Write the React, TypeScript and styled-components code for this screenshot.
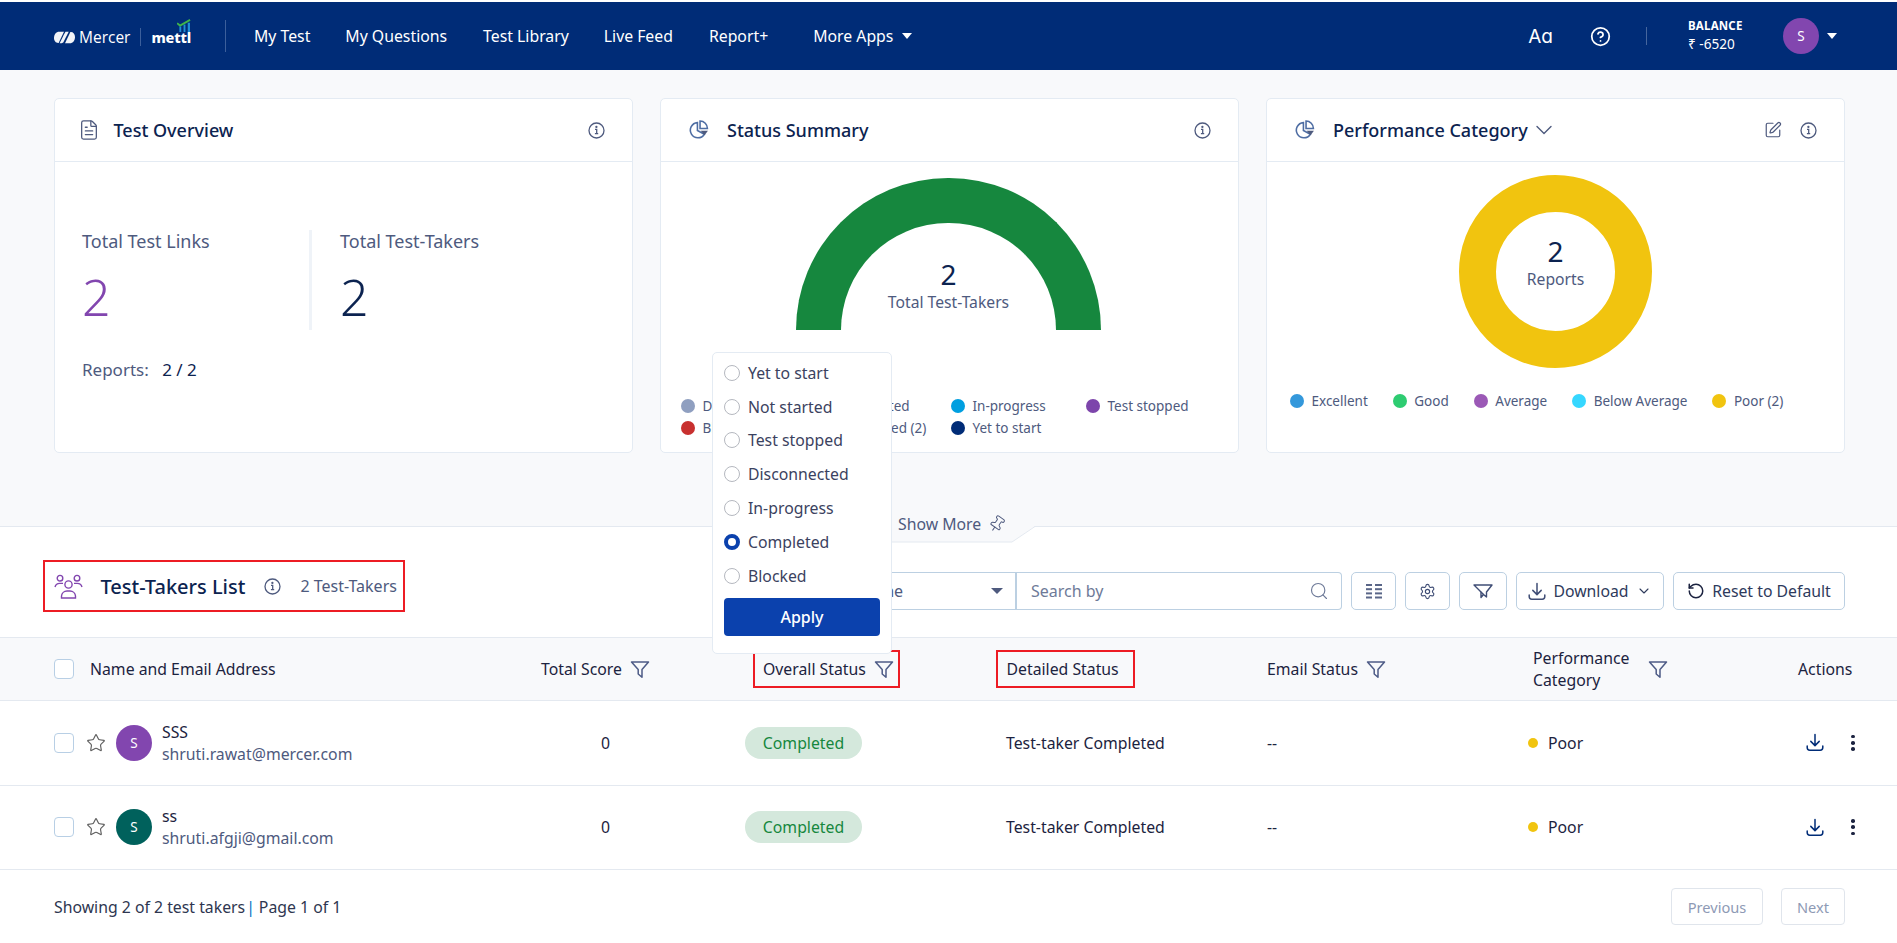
import React from "react";
import styled, { createGlobalStyle } from "styled-components";
import { ChevronDown, Search, Settings, RotateCcw, Star, SquarePen, FileText, Pin, CircleHelp } from "lucide-react";

const Global = createGlobalStyle`
  html, body { margin: 0; padding: 0; background: #fff; }
  * { box-sizing: border-box; }
  body { font-family: "Noto Sans", "Open Sans", sans-serif; color: #1c2340; }
`;

const Page = styled.div`
  position: relative;
  width: 1897px;
  height: 943px;
  overflow: hidden;
  padding-top: 2px;
  background: #fff;
`;

/* ---------- top bar ---------- */
const TopBar = styled.header`
  height: 68px;
  background: #002c77;
  display: flex;
  align-items: center;
  padding-left: 54px;
  color: #fff;
`;
const Logo = styled.div`
  display: flex;
  align-items: center;
  width: 172px;
  height: 32px;
  padding-top: 2px;
  border-right: 1px solid #3c5f9b;
  margin-right: 28px;
`;
const LogoWord = styled.span`
  font-size: 15.5px;
  margin-left: 4px;
  font-family: "Open Sans", sans-serif;
`;
const LogoSep = styled.span`
  width: 1px;
  height: 18px;
  background: #3c5f9b;
  margin: 0 10px;
`;
const Mettl = styled.span`
  position: relative;
  font-size: 14.5px;
  font-weight: 800;
  letter-spacing: -0.2px;
  display: inline-block;
  line-height: 20px;
`;
const MettlBars = styled.span`
  position: absolute;
  right: -1px;
  top: -8px;
  display: flex;
`;
const NavItem = styled.a<{ $gap: number }>`
  font-size: 15.8px;
  margin-right: ${(p) => p.$gap}px;
  display: flex;
  align-items: center;
  gap: 9px;
  white-space: nowrap;
`;
const Caret = styled.span<{ $color?: string; $w?: number }>`
  display: inline-block;
  width: 0;
  height: 0;
  border-left: ${(p) => p.$w || 5}px solid transparent;
  border-right: ${(p) => p.$w || 5}px solid transparent;
  border-top: 6px solid ${(p) => p.$color || "#fff"};
`;
const BarRight = styled.div`
  margin-left: auto;
  display: flex;
  align-items: center;
  padding-right: 60px;
`;
const FontIcon = styled.span`
  font-family: Inter, sans-serif;
  font-feature-settings: "cv11" 1;
  font-size: 19px;
  line-height: 1;
  margin-right: 37px;
`;
const BarDivider = styled.span`
  width: 1px;
  height: 18px;
  background: #46669d;
  margin: 0 41px 0 35px;
`;
const Balance = styled.div`
  display: flex;
  flex-direction: column;
  width: 95px;
  margin-top: -2px;
`;
const BalanceLabel = styled.span`
  font-size: 11.5px;
  font-weight: 700;
  line-height: 18px;
  letter-spacing: 0.2px;
`;
const BalanceValue = styled.span`
  font-size: 13.6px;
  line-height: 18px;
`;
const Avatar = styled.span<{ $bg: string }>`
  width: 36px;
  height: 36px;
  border-radius: 50%;
  background: ${(p) => p.$bg};
  color: #fff;
  font-size: 13.5px;
  display: flex;
  align-items: center;
  justify-content: center;
  flex: none;
`;
const UserMenu = styled.div`
  display: flex;
  align-items: center;
  gap: 8px;
`;

/* ---------- overview ---------- */
const Overview = styled.section`
  height: 456px;
  background: #f8f9fb;
  padding: 28px 0 0 54px;
  display: grid;
  grid-template-columns: repeat(3, 579px);
  column-gap: 27px;
  align-items: start;
`;
const Card = styled.article`
  height: 355px;
  background: #fff;
  border: 1px solid #e4ebf3;
  border-radius: 5px;
`;
const CardHead = styled.div`
  height: 63px;
  display: flex;
  align-items: center;
  border-bottom: 1px solid #e4ebf3;
  padding: 0 27px 0 26px;
  color: #4e5a7e;
`;
const CardTitle = styled.h2`
  font-size: 18px;
  font-weight: 500;
  color: #0c2350;
  margin: 0 0 0 15px;
  white-space: nowrap;
`;
const DocIcon = styled(FileText)`
  margin: 0 -1px 0 -3.5px;
  flex: none;
`;
const TitleChevron = styled(ChevronDown)`
  margin-left: 2px;
  flex: none;
`;
const HeadActions = styled.div`
  margin-left: auto;
  display: flex;
  align-items: center;
  gap: 18px;
`;
const StatsBody = styled.div`
  padding: 67px 0 0 27px;
`;
const Stats = styled.div`
  display: flex;
  height: 101px;
  align-items: flex-start;
`;
const Stat = styled.div`
  width: 227px;
  flex: none;
`;
const StatSecond = styled.div`
  border-left: 3px solid #eff3f8;
  height: 100px;
  margin-top: 1px;
  padding-left: 28px;
`;
const StatLabel = styled.div`
  font-size: 18px;
  line-height: 24px;
  color: #4e5a7e;
  white-space: nowrap;
`;
const StatSecondLabel = styled(StatLabel)`
  margin-top: -1px;
`;
const StatValue = styled.div<{ $color: string }>`
  font-size: 50px;
  font-weight: 300;
  line-height: 68px;
  margin-top: 10px;
  color: ${(p) => p.$color};
`;
const ReportsLine = styled.div`
  font-size: 17px;
  line-height: 22px;
  margin-top: 29px;
  color: #4e5a7e;
`;
const ReportsValue = styled.span`
  color: #0c2350;
  margin-left: 9px;
`;
const GaugeBody = styled.div`
  padding-top: 16px;
  display: flex;
  flex-direction: column;
  align-items: center;
`;
const Gauge = styled.div`
  width: 305px;
  height: 152px;
  margin-right: 2px;
  border: 45px solid #16873e;
  border-bottom: 0;
  border-radius: 153px 153px 0 0;
  display: flex;
  flex-direction: column;
  justify-content: flex-end;
  align-items: center;
  padding-bottom: 18px;
`;
const CenterValue = styled.div`
  font-size: 28px;
  line-height: 36px;
  color: #0c2350;
`;
const CenterLabel = styled.div`
  font-size: 15.7px;
  line-height: 20px;
  color: #4e5a7e;
  white-space: nowrap;
`;
const GaugeLegend = styled.div`
  align-self: flex-start;
  margin: 67px 0 0 20px;
  display: grid;
  grid-template-columns: repeat(4, 135px);
  row-gap: 4px;
`;
const LegendItem = styled.div`
  display: flex;
  align-items: center;
  gap: 7.5px;
  font-size: 13.5px;
  line-height: 18px;
  color: #4e5a7e;
  white-space: nowrap;
`;
const Dot = styled.span<{ $c: string; $s?: number }>`
  width: ${(p) => p.$s || 14}px;
  height: ${(p) => p.$s || 14}px;
  border-radius: 50%;
  background: ${(p) => p.$c};
  flex: none;
`;
const DonutBody = styled.div`
  padding-top: 13px;
  display: flex;
  flex-direction: column;
  align-items: center;
`;
const Donut = styled.div`
  width: 193px;
  height: 193px;
  border: 37px solid #f1c40f;
  border-radius: 50%;
  display: flex;
  flex-direction: column;
  align-items: center;
  justify-content: center;
  padding-bottom: 22px;
`;
const DonutLegend = styled.div`
  align-self: flex-start;
  margin: 24px 0 0 23px;
  display: flex;
  gap: 25px;
`;

/* ---------- list ---------- */
const ListSection = styled.section`
  position: relative;
  border-top: 1px solid #e4e9f0;
`;
const ShowMore = styled.div`
  position: absolute;
  left: 860px;
  top: -14px;
  display: flex;
  align-items: center;
  gap: 7px;
  padding-left: 38px;
  height: 22px;
  font-size: 15.8px;
  color: #4e5a7e;
  z-index: 1;
`;
const PinIcon = styled(Pin)`
  transform: rotate(35deg);
  flex: none;
`;
const ShowMoreShape = styled.svg`
  position: absolute;
  left: 860px;
  top: -1px;
`;
const ListHead = styled.div`
  height: 110px;
  display: flex;
  justify-content: space-between;
  padding: 33px 52px 0 43px;
`;
const Highlight = styled.div`
  border: 2.5px solid #ed1c24;
`;
const TitleBox = styled(Highlight)`
  width: 362px;
  height: 52px;
  display: flex;
  align-items: center;
  padding-left: 8.5px;
`;
const ListTitle = styled.h1`
  font-size: 20px;
  font-weight: 500;
  color: #0c2350;
  margin: 0 19px 0 18px;
  white-space: nowrap;
`;
const ListCount = styled.span`
  font-size: 16px;
  color: #4e5a7e;
  margin-left: 19px;
  white-space: nowrap;
`;
const Toolbar = styled.div`
  display: flex;
  gap: 9px;
  margin-top: 12px;
  height: 38px;
`;
const SearchGroup = styled.div`
  display: flex;
  height: 38px;
`;
const SelectBox = styled.div`
  width: 166px;
  border: 1px solid #bcd0e2;
  border-right: 2px solid #bcd0e2;
  border-radius: 4px 0 0 4px;
  display: flex;
  align-items: center;
  justify-content: space-between;
  padding: 0 12px 0 6px;
  font-size: 16px;
  color: #4e5a7e;
`;
const SearchBox = styled.div`
  width: 325px;
  border: 1px solid #bcd0e2;
  border-left: 0;
  border-radius: 0 4px 4px 0;
  display: flex;
  align-items: center;
  justify-content: space-between;
  padding: 0 12px 0 14px;
  font-size: 16px;
  color: #6e7a98;
`;
const ToolButton = styled.button<{ $w: number }>`
  width: ${(p) => p.$w}px;
  height: 38px;
  background: #fff;
  border: 1px solid #bcd0e2;
  border-radius: 5px;
  display: flex;
  align-items: center;
  justify-content: center;
  gap: 7px;
  padding: 0;
  font: 400 15.8px "Noto Sans", sans-serif;
  color: #2e3a5c;
  white-space: nowrap;
`;

/* ---------- table ---------- */
const columns = "487px 204px 251px 271px 261px 270px 1fr";
const TableHead = styled.div`
  height: 64px;
  background: #f8f9fb;
  border-top: 1px solid #e4e9f0;
  border-bottom: 1px solid #e4e9f0;
  display: grid;
  grid-template-columns: ${columns};
  padding-left: 54px;
  align-items: center;
  font-size: 15.8px;
  color: #1c2340;
`;
const HeadCell = styled.div`
  display: flex;
  align-items: center;
  gap: 8px;
  white-space: nowrap;
`;
const NameHead = styled(HeadCell)`
  gap: 16px;
`;
const HighlightCell = styled(Highlight)`
  display: flex;
  align-items: center;
  gap: 8px;
  height: 38px;
  white-space: nowrap;
  padding-left: 8.5px;
`;
const OverallCell = styled(HighlightCell)`
  width: 147px;
  margin-left: 7.5px;
`;
const DetailedCell = styled(HighlightCell)`
  width: 139px;
`;
const PerfCell = styled(HeadCell)`
  padding-left: 5px;
  gap: 18px;
  white-space: normal;
`;
const PerfLabel = styled.span`
  width: 97px;
  line-height: 22px;
`;
const Row = styled.div`
  height: 84.5px;
  border-bottom: 1px solid #e4e9f0;
  display: grid;
  grid-template-columns: ${columns};
  padding-left: 54px;
  align-items: center;
  font-size: 15.8px;
`;
const Person = styled.div`
  display: flex;
  align-items: center;
`;
const Check = styled.span`
  width: 20px;
  height: 20px;
  border: 1px solid #b8cfe5;
  border-radius: 4px;
  background: #fff;
  flex: none;
`;
const StarWrap = styled.span`
  display: flex;
  margin: 0 10px 0 12px;
  color: #5f5f5f;
`;
const PersonText = styled.div`
  margin-left: 10px;
`;
const PersonName = styled.div`
  font-size: 15.8px;
  line-height: 22px;
  color: #1c2340;
`;
const PersonMail = styled.div`
  font-size: 15.8px;
  line-height: 22px;
  color: #4e5a7e;
`;
const Score = styled.div`
  padding-left: 60px;
`;
const Pill = styled.span`
  display: inline-flex;
  width: 117px;
  height: 32px;
  align-items: center;
  justify-content: center;
  border-radius: 16px;
  background: #d4e8dc;
  color: #16873e;
`;
const Detail = styled.div`
  padding-left: 10px;
`;
const Perf = styled.div`
  display: flex;
  align-items: center;
  gap: 10px;
`;
const Actions = styled.div`
  display: flex;
  align-items: center;
  padding-left: 8px;
  gap: 27px;
`;
const Kebab = styled.span`
  display: flex;
  flex-direction: column;
  gap: 2.5px;
`;
const KebabDot = styled.span`
  width: 3.6px;
  height: 3.6px;
  border-radius: 50%;
  background: #1c2340;
`;
const Footer = styled.div`
  display: flex;
  align-items: center;
  justify-content: space-between;
  padding: 18px 52px 0 54px;
  font-size: 15.8px;
  color: #2e3650;
`;
const Bar = styled.span`
  color: #0073c5;
  margin: 0 4px 0 1px;
`;
const Pager = styled.div`
  display: flex;
  gap: 18px;
`;
const PageButton = styled.button<{ $w: number }>`
  width: ${(p) => p.$w}px;
  height: 37px;
  background: #fff;
  border: 1px solid #e0e5ec;
  border-radius: 4px;
  padding: 0;
  font: 400 14.6px "Noto Sans", sans-serif;
  color: #8e9ab5;
`;

/* ---------- popup ---------- */
const Popup = styled.div`
  position: absolute;
  left: 712px;
  top: 352px;
  width: 180px;
  height: 302px;
  background: #fff;
  border: 1px solid #e4ebf3;
  border-radius: 5px;
  padding: 3px 11px 0;
  z-index: 5;
`;
const Option = styled.div`
  height: 33.8px;
  display: flex;
  align-items: center;
  gap: 8px;
  font-size: 15.8px;
  color: #3b4260;
  white-space: nowrap;
`;
const Radio = styled.span<{ $on?: boolean }>`
  width: 16px;
  height: 16px;
  border-radius: 50%;
  flex: none;
  background: #fff;
  border: ${(p) => (p.$on ? "4.5px solid #0b41ad" : "1px solid #b5b8bf")};
`;
const Apply = styled.button`
  width: 156px;
  height: 38px;
  margin-top: 5px;
  border: 0;
  border-radius: 4px;
  background: #0b41ad;
  color: #fff;
  font: 500 16px "Noto Sans", sans-serif;
`;

/* ---------- drawings ---------- */
const Info = ({ c = "#4e5a7e" }: { c?: string }) => (
  <svg width="17" height="17" viewBox="0 0 17 17" fill="none" stroke={c} strokeWidth="1.3">
    <circle cx="8.5" cy="8.5" r="7.5" />
    <path d="M7 7.4h1.7v4.2M6.9 11.7h3.3" />
    <circle cx="8.4" cy="4.9" r="0.5" fill={c} />
  </svg>
);
const PieSvg = styled.svg`
  margin: 0 3px 0 2px;
  flex: none;
`;
const PieIcon = () => (
  <PieSvg width="20" height="20" viewBox="0 0 19 19" fill="none" stroke="#4e6da3" strokeWidth="1.5">
    <path d="M8 2.5a7.2 7.2 0 1 0 6.6 11L8 10z" />
    <path d="M10.5 1a7 7 0 0 1 7 7h-7z" />
    <path d="M11 10.3h7l-3.2 4.2z" fill="#4e5a7e" stroke="none" />
  </PieSvg>
);
const Filter = () => (
  <svg width="20" height="19" viewBox="0 0 20 19" fill="none" stroke="#4d5b86" strokeWidth="1.5" strokeLinejoin="round">
    <path d="M1.5 2h17l-6.5 7.4v7.8l-3.8-3.2V9.4z" />
  </svg>
);
const TrayDownload = ({ c }: { c: string }) => (
  <svg width="18" height="19" viewBox="0 0 18 19" fill="none" stroke={c} strokeWidth="1.5" strokeLinecap="round" strokeLinejoin="round">
    <path d="M9 1.5v11M4.8 8.4 9 12.6l4.2-4.2M1.2 13v1.6a2.6 2.6 0 0 0 2.6 2.6h10.4a2.6 2.6 0 0 0 2.6-2.6V13" />
  </svg>
);
const People = () => (
  <svg width="29" height="25" viewBox="0 0 29 25" fill="none" stroke="#8246af" strokeWidth="1.4">
    <circle cx="14.5" cy="10.5" r="3.6" />
    <circle cx="6" cy="4.2" r="2.8" />
    <circle cx="23" cy="4.2" r="2.8" />
    <path d="M7.5 24v-2a5.5 5.5 0 0 1 5.5-5h3a5.5 5.5 0 0 1 5.5 5v2z" />
    <path d="M1 13a5 5 0 0 1 5-3.6h3M28 13a5 5 0 0 0-5-3.6h-3" />
  </svg>
);
const ColumnsIcon = () => (
  <svg width="18" height="16" viewBox="0 0 18 16" fill="#5a6688">
    <rect x="1" y="1" width="6" height="2" />
    <rect x="10" y="1" width="7" height="2" />
    <rect x="1" y="5.2" width="6" height="2" />
    <rect x="10" y="5.2" width="7" height="2" />
    <rect x="1" y="9.4" width="6" height="2" />
    <rect x="10" y="9.4" width="7" height="2" />
    <rect x="1" y="13.5" width="6" height="2" />
    <rect x="10" y="13.5" width="7" height="2" />
  </svg>
);
const DoubleFilter = () => (
  <svg width="20" height="16" viewBox="0 0 20 16" fill="none" stroke="#3f4d75" strokeWidth="1.4" strokeLinejoin="round">
    <path d="M1 2h18l-5.5 7v5l-3-2.5L8 14.5V9z" />
    <path d="M8 9l2.5 2.5" />
  </svg>
);
const MercerMark = () => (
  <svg width="21" height="13" viewBox="0 0 20 12" fill="#f2f4f8">
    <path d="M5 0.5h4.5L4.4 11.2C2 11.5 0 9.4 0 6.5 0 3 2 .5 5 .5z" />
    <path d="M15 11.5h-4.5L15.6.8C18 .5 20 2.6 20 5.5c0 3.5-2 6-5 6z" />
    <path d="M9.6 2.8 11 .5h3L8.8 10.8 7.2 11.5H5.4z" />
  </svg>
);
const Bars = () => (
  <svg width="15" height="13" viewBox="0 0 16 14" fill="none">
    <rect x="2.5" y="8" width="2" height="6" fill="#1f8fd6" />
    <rect x="7" y="6" width="2" height="8" fill="#1f8fd6" />
    <rect x="11.5" y="4" width="2.4" height="10" fill="#1f8fd6" />
    <path d="M0 4.5l3.2 2.6L14 1" stroke="#3fb54a" strokeWidth="2" />
  </svg>
);

const options = ["Yet to start", "Not started", "Test stopped", "Disconnected", "In-progress", "Completed", "Blocked"];
const statusLegend: [string, string][] = [
  ["#8f9fc0", "Disconnected"],
  ["#f1c40f", "Not started"],
  ["#009fe0", "In-progress"],
  ["#7d45ab", "Test stopped"],
  ["#c8302f", "Blocked"],
  ["#16873e", "Completed (2)"],
  ["#002c77", "Yet to start"],
];
const perfLegend: [string, string][] = [
  ["#3498db", "Excellent"],
  ["#2ecc71", "Good"],
  ["#9b59b6", "Average"],
  ["#36d7ff", "Below Average"],
  ["#f1c40f", "Poor (2)"],
];
const people = [
  { name: "SSS", mail: "shruti.rawat@mercer.com", bg: "#8246af" },
  { name: "ss", mail: "shruti.afgji@gmail.com", bg: "#00615c" },
];

export default function App() {
  return (
    <Page>
      <Global />
      <TopBar>
        <Logo>
          <MercerMark />
          <LogoWord>Mercer</LogoWord>
          <LogoSep />
          <Mettl>
            mettl
            <MettlBars>
              <Bars />
            </MettlBars>
          </Mettl>
        </Logo>
        <NavItem $gap={35}>My Test</NavItem>
        <NavItem $gap={36}>My Questions</NavItem>
        <NavItem $gap={35}>Test Library</NavItem>
        <NavItem $gap={36}>Live Feed</NavItem>
        <NavItem $gap={45}>Report+</NavItem>
        <NavItem $gap={0}>
          More Apps <Caret />
        </NavItem>
        <BarRight>
          <FontIcon>Aa</FontIcon>
          <CircleHelp size={21} strokeWidth={2} />
          <BarDivider />
          <Balance>
            <BalanceLabel>BALANCE</BalanceLabel>
            <BalanceValue>₹ -6520</BalanceValue>
          </Balance>
          <UserMenu>
            <Avatar $bg="#8246af">S</Avatar>
            <Caret />
          </UserMenu>
        </BarRight>
      </TopBar>

      <Overview>
        <Card>
          <CardHead>
            <DocIcon size={22} strokeWidth={1.4} />
            <CardTitle>Test Overview</CardTitle>
            <HeadActions>
              <Info />
            </HeadActions>
          </CardHead>
          <StatsBody>
            <Stats>
              <Stat>
                <StatLabel>Total Test Links</StatLabel>
                <StatValue $color="#8246af">2</StatValue>
              </Stat>
              <StatSecond>
                <StatSecondLabel>Total Test-Takers</StatSecondLabel>
                <StatValue $color="#0c2350">2</StatValue>
              </StatSecond>
            </Stats>
            <ReportsLine>
              Reports: <ReportsValue>2 / 2</ReportsValue>
            </ReportsLine>
          </StatsBody>
        </Card>

        <Card>
          <CardHead>
            <PieIcon />
            <CardTitle>Status Summary</CardTitle>
            <HeadActions>
              <Info />
            </HeadActions>
          </CardHead>
          <GaugeBody>
            <Gauge>
              <CenterValue>2</CenterValue>
              <CenterLabel>Total Test-Takers</CenterLabel>
            </Gauge>
            <GaugeLegend>
              {statusLegend.map(([c, t]) => (
                <LegendItem key={t}>
                  <Dot $c={c} />
                  {t}
                </LegendItem>
              ))}
            </GaugeLegend>
          </GaugeBody>
        </Card>

        <Card>
          <CardHead>
            <PieIcon />
            <CardTitle>Performance Category</CardTitle>
            <TitleChevron size={28} strokeWidth={1.2} />
            <HeadActions>
              <SquarePen size={18} strokeWidth={1.6} />
              <Info />
            </HeadActions>
          </CardHead>
          <DonutBody>
            <Donut>
              <CenterValue>2</CenterValue>
              <CenterLabel>Reports</CenterLabel>
            </Donut>
            <DonutLegend>
              {perfLegend.map(([c, t]) => (
                <LegendItem key={t}>
                  <Dot $c={c} />
                  {t}
                </LegendItem>
              ))}
            </DonutLegend>
          </DonutBody>
        </Card>
      </Overview>

      <ListSection>
        <ShowMoreShape width="180" height="18" viewBox="0 0 180 18">
          <path d="M0 0H175L152 16H0Z" fill="#f8f9fb" />
          <path d="M175 0.5L152 16H0" fill="none" stroke="#e4e9f0" />
        </ShowMoreShape>
        <ShowMore>
          Show More <PinIcon size={18} strokeWidth={1.3} />
        </ShowMore>
        <ListHead>
          <TitleBox>
            <People />
            <ListTitle>Test-Takers List</ListTitle>
            <Info />
            <ListCount>2 Test-Takers</ListCount>
          </TitleBox>
          <Toolbar>
            <SearchGroup>
              <SelectBox>
                Name
                <Caret $color="#4e5a7e" $w={6} />
              </SelectBox>
              <SearchBox>
                Search by
                <Search size={20} strokeWidth={1.4} />
              </SearchBox>
            </SearchGroup>
            <ToolButton $w={45}>
              <ColumnsIcon />
            </ToolButton>
            <ToolButton $w={45}>
              <Settings size={17} strokeWidth={1.6} color="#3f4d75" />
            </ToolButton>
            <ToolButton $w={48}>
              <DoubleFilter />
            </ToolButton>
            <ToolButton $w={148}>
              <TrayDownload c="#3f4d75" />
              Download
              <ChevronDown size={16} strokeWidth={1.6} />
            </ToolButton>
            <ToolButton $w={172}>
              <RotateCcw size={18} strokeWidth={2} color="#1c2340" />
              Reset to Default
            </ToolButton>
          </Toolbar>
        </ListHead>

        <TableHead>
          <NameHead>
            <Check />
            Name and Email Address
          </NameHead>
          <HeadCell>
            Total Score <Filter />
          </HeadCell>
          <OverallCell>
            Overall Status <Filter />
          </OverallCell>
          <DetailedCell>Detailed Status</DetailedCell>
          <HeadCell>
            Email Status <Filter />
          </HeadCell>
          <PerfCell>
            <PerfLabel>Performance Category</PerfLabel>
            <Filter />
          </PerfCell>
          <HeadCell>Actions</HeadCell>
        </TableHead>

        {people.map((p) => (
          <Row key={p.name}>
            <Person>
              <Check />
              <StarWrap>
                <Star size={20} strokeWidth={1.4} />
              </StarWrap>
              <Avatar $bg={p.bg}>S</Avatar>
              <PersonText>
                <PersonName>{p.name}</PersonName>
                <PersonMail>{p.mail}</PersonMail>
              </PersonText>
            </Person>
            <Score>0</Score>
            <div>
              <Pill>Completed</Pill>
            </div>
            <Detail>Test-taker Completed</Detail>
            <div>--</div>
            <Perf>
              <Dot $c="#f1c40f" $s={10} />
              Poor
            </Perf>
            <Actions>
              <TrayDownload c="#002c77" />
              <Kebab>
                <KebabDot />
                <KebabDot />
                <KebabDot />
              </Kebab>
            </Actions>
          </Row>
        ))}

        <Footer>
          <span>
            Showing 2 of 2 test takers<Bar>|</Bar>Page 1 of 1
          </span>
          <Pager>
            <PageButton $w={92}>Previous</PageButton>
            <PageButton $w={64}>Next</PageButton>
          </Pager>
        </Footer>
      </ListSection>

      <Popup>
        {options.map((o) => (
          <Option key={o}>
            <Radio $on={o === "Completed"} />
            {o}
          </Option>
        ))}
        <Apply>Apply</Apply>
      </Popup>
    </Page>
  );
}
